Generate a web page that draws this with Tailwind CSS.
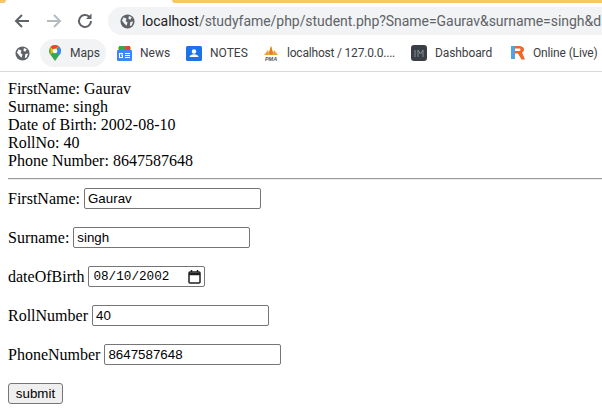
<!DOCTYPE html>
<html lang="en">
<head>
    <meta charset="UTF-8">
    <title>student</title>
    <script src="https://cdn.jsdelivr.net/npm/@tailwindcss/browser@4"></script>
</head>
<body class="w-[602px] h-[410px] overflow-hidden bg-white font-['Liberation_Serif',serif] text-[16px] leading-[18px] text-black">

    <!-- browser chrome -->
    <div class="h-[72px] border-b border-[#d9d9d9] overflow-hidden">
        <div class="h-[3px] flex">
            <div class="w-[6px] bg-[#f6c766] rounded-br-[3px]"></div>
            <div class="w-[166px]"></div>
            <div class="flex-1 bg-[#f6c766] rounded-bl-[4px]"></div>
        </div>
        <div class="h-[32px] mt-[2px] flex items-center font-['Roboto',sans-serif]">
            <svg class="ml-[13px]" width="18" height="18" viewBox="0 0 18 18" fill="none" stroke="#5f6368" stroke-width="2"><path d="M16 9H3.500M9 3 3 9l6 6"/></svg>
            <svg class="ml-[14px]" width="18" height="18" viewBox="0 0 18 18" fill="none" stroke="#b5bcc0" stroke-width="2"><path d="M2 9h12.500M9 3l6 6-6 6"/></svg>
            <svg class="ml-[13px]" width="18" height="18" viewBox="0 0 18 18" fill="none" stroke="#5f6368" stroke-width="2"><path d="M15 9a6 6 0 1 1-1.800-4.300"/><path d="M15.500 1.500v5.500H10" fill="#5f6368" stroke="none"/></svg>
            <div class="ml-[14px] flex-1 h-[28px] bg-[#f1f3f4] rounded-l-[14px] flex items-center overflow-hidden">
                <svg class="ml-[12px] shrink-0" width="15" height="15" viewBox="0 0 16 16"><circle cx="8" cy="8" r="7.500" fill="#5f6368"/><path d="M4 3.500 7 5 6 7.500 8 9 7 12.500 4.500 10 2 7ZM9.500 2l3 1.500L11 6 9 5ZM11 8.500l3-.5-1.500 4-2 1Z" fill="#f1f3f4"/></svg>
                <span class="ml-[7px] whitespace-nowrap text-[14px] leading-[20px] tracking-[-0.04px] text-[#5f6368] font-['Roboto',sans-serif]"><span class="text-[#202124]">localhost</span>/studyfame/php/student.php?Sname=Gaurav&amp;surname=singh&amp;d</span>
            </div>
        </div>
        <div class="h-[28px] mt-[2px] flex items-center text-[12px] leading-[16px] text-[#3c4043] font-['Roboto',sans-serif] whitespace-nowrap">
            <svg class="ml-[15px]" width="15" height="15" viewBox="0 0 16 16"><circle cx="8" cy="8" r="7.500" fill="#5f6368"/><path d="M4 3.500 7 5 6 7.500 8 9 7 12.500 4.500 10 2 7ZM9.500 2l3 1.500L11 6 9 5ZM11 8.500l3-.5-1.500 4-2 1Z" fill="#fff"/></svg>
            <div class="ml-[10px] h-[28px] w-[66px] bg-[#f1f3f4] rounded-[14px] flex items-center">
                <svg class="ml-[8px]" width="14" height="18" viewBox="0 0 14 18"><path d="M7 1a6 6 0 0 0-6 6c0 1.500.6 2.700 1.500 3.800L7 17l4.500-6.200C12.400 9.700 13 8.500 13 7a6 6 0 0 0-6-6Z" fill="#34a853"/><path d="M2.500 10.800 11 2.500A6 6 0 0 0 7 1 6 6 0 0 0 2.500 3Z" fill="#f4b400"/><path d="M7 1a6 6 0 0 0-4.500 2l3 2.500L11 2.500A6 6 0 0 0 7 1Z" fill="#ea4335"/><path d="M11 2.500 8.500 8.500 11.500 10.800C12.400 9.700 13 8.500 13 7c0-1.800-.8-3.400-2-4.500Z" fill="#4285f4"/><circle cx="7" cy="7" r="2.300" fill="#fff"/></svg>
                <span class="ml-[8px]">Maps</span>
            </div>
            <svg class="ml-[10px]" width="17" height="17" viewBox="0 0 17 17"><path d="M2 2h13v5H2Z" fill="#f4b400"/><path d="M3 1h6v4H3Z" fill="#34a853"/><path d="M9 1h5v4H9Z" fill="#ea4335"/><rect x="1" y="5" width="15" height="11" rx="1" fill="#4285f4"/><path d="M3 8h4v1H4v3h2v-1.500H5v-1h2V13H3ZM9 8h5v1H9ZM9 10h5v1H9ZM9 12h5v1H9Z" fill="#fff"/></svg>
            <span class="ml-[7px] w-[30px]">News</span>
            <svg class="ml-[16px]" width="16" height="15" viewBox="0 0 16 15"><rect width="16" height="15" rx="1.500" fill="#1a73e8"/><circle cx="8" cy="5.500" r="2.200" fill="#fff"/><path d="M3.500 11c0-2 2.500-2.800 4.500-2.800s4.500.8 4.500 2.800Z" fill="#fff"/></svg>
            <span class="ml-[8px] w-[38px]">NOTES</span>
            <svg class="ml-[15px]" width="16" height="17" viewBox="0 0 16 17"><path d="M1 10 5 5l1 3 2-7 2 7 1-3 4 5Z" fill="#f0a030"/><path d="M6 8 8 1l2 7-2 2Z" fill="#e8791c"/><text x="8" y="15.500" text-anchor="middle" font-family="Liberation Sans, sans-serif" font-size="5.500" font-weight="700" font-style="italic" fill="#555">PMA</text></svg>
            <span class="ml-[8px] w-[107px] tracking-[-0.2px]">localhost / 127.0.0....</span>
            <div class="ml-[17px] w-[16px] h-[16px] rounded-[3px] bg-[#3a3f45] flex items-center justify-center">
                <svg width="10" height="9" viewBox="0 0 10 9" fill="none" stroke="#868e96" stroke-width="1"><path d="M1 1v7M4 8V1l2.500 4L9 1v7"/></svg>
            </div>
            <span class="ml-[8px] w-[57px] tracking-[-0.1px]">Dashboard</span>
            <svg class="ml-[19px]" width="14" height="18" viewBox="0 0 14 18"><path d="M0 2h4v13H0Z" fill="#4ea4e8"/><path d="M4 2h4c3 0 5 1.500 5 3.500 0 1.500-1 2.500-2 3l3 7h-3.500L7 9.500H4V7h4c1 0 1.500-.5 1.500-1.300S9 4.500 8 4.500H4Z" fill="#f26522"/></svg>
            <span class="ml-[8px] tracking-[-0.15px]">Online (Live)</span>
        </div>
    </div>

    <!-- page -->
    <div class="px-[8px] pt-[8px]">
        <div>FirstName: Gaurav</div>
        <div>Surname: singh</div>
        <div>Date of Birth: 2002-08-10</div>
        <div>RollNo: 40</div>
        <div>Phone Number: 8647587648</div>
        <hr class="mt-[8px] mb-[8px] -mr-[8px] border-t border-b border-t-[#9a9a9a] border-b-[#eeeeee]">
        <form class="flex flex-col gap-[18px]">
            <div class="flex items-center h-[21px] gap-[4px]">
                <span>FirstName:</span>
                <input class="w-[177px] h-[21px] px-[3px] border border-[#767676] rounded-[2px] font-['Liberation_Sans',sans-serif] text-[13.33px]" value="Gaurav">
            </div>
            <div class="flex items-center h-[21px] gap-[4px]">
                <span>Surname:</span>
                <input class="w-[177px] h-[21px] px-[3px] border border-[#767676] rounded-[2px] font-['Liberation_Sans',sans-serif] text-[13.33px]" value="singh">
            </div>
            <div class="flex items-center h-[21px] gap-[4px]">
                <span>dateOfBirth</span>
                <div class="w-[117px] h-[21px] pl-[4px] border border-[#767676] rounded-[2px] flex items-center font-['Liberation_Mono',monospace] text-[12.67px] leading-[14px]">
                    <span class="whitespace-pre">08/10/2002</span>
                    <svg class="ml-[19px]" width="13" height="14" viewBox="0 0 13 14" fill="none"><rect x="1" y="2" width="11" height="11" rx="1" stroke="#202020" stroke-width="1.500"/><path d="M1 4h11" stroke="#202020" stroke-width="2.500"/><path d="M3.500 0v2M9.500 0v2" stroke="#202020" stroke-width="1.500"/></svg>
                </div>
            </div>
            <div class="flex items-center h-[21px] gap-[4px]">
                <span>RollNumber</span>
                <input class="w-[177px] h-[21px] px-[3px] border border-[#767676] rounded-[2px] font-['Liberation_Sans',sans-serif] text-[13.33px]" value="40">
            </div>
            <div class="flex items-center h-[21px] gap-[4px]">
                <span>PhoneNumber</span>
                <input class="w-[177px] h-[21px] px-[3px] border border-[#767676] rounded-[2px] font-['Liberation_Sans',sans-serif] text-[13.33px]" value="8647587648">
            </div>
            <div>
                <button type="button" class="w-[55px] h-[21px] bg-[#efefef] border border-[#767676] rounded-[3px] font-['Liberation_Sans',sans-serif] text-[13.33px] leading-[15px]">submit</button>
            </div>
        </form>
    </div>
</body>
</html>
